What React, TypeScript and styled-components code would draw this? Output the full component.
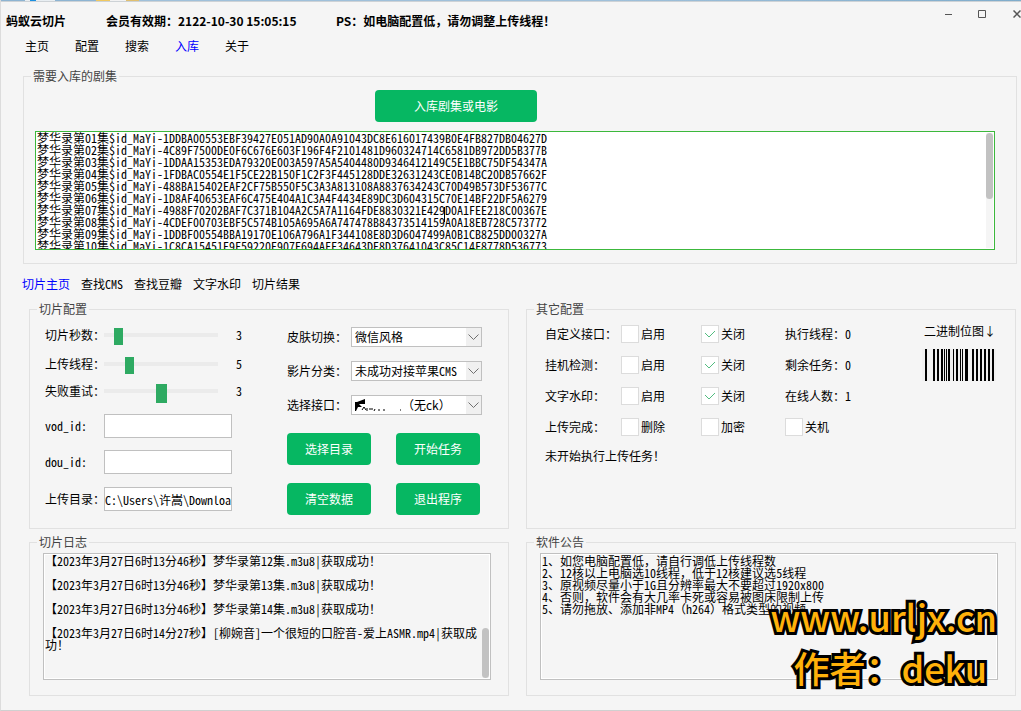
import React from "react";
import styled, { createGlobalStyle } from "styled-components";

const GlobalStyle = createGlobalStyle`
  *, *::before, *::after { box-sizing: border-box; }
  body {
    margin: 0;
    background: #f5f5f5;
    color: #000;
    font-family: "Noto Sans CJK SC", sans-serif;
    font-size: 12px;
    line-height: 16px;
    text-spacing-trim: space-all;
  }
  button, input, select, textarea { font: inherit; color: inherit; }
`;

/* ---------- window frame ---------- */

const Window = styled.div`
  position: relative;
  min-height: 100vh;
  border-left: 1px solid #dcdcdc;
  border-bottom: 1px solid #d0d0d0;
  overflow: hidden;
`;

const DesktopEdge = styled.div`
  height: 2px;
  border-bottom: 1px solid #cdd2d6;
  background: linear-gradient(
    90deg,
    #8db4d2 0 24px,
    #e8eef2 24px 29px,
    #1b8fe0 29px 35px,
    #e8eef2 35px 54px,
    #8db4d2 54px 95px,
    #f0c860 95px 109px,
    #f2f2f2 109px 125px,
    #e0bf70 125px 138px,
    #9fc0da 138px 60%,
    #7faccb
  );
`;

const TitleBar = styled.header`
  display: flex;
  height: 36px;
  padding-left: 5px;
`;

const TitleText = styled.div<{ $width?: number }>`
  width: ${(p) => (p.$width ? `${p.$width}px` : "auto")};
  padding-top: 11px;
  font-weight: 700;
  white-space: nowrap;
`;

const WindowButtons = styled.div`
  display: flex;
  margin-left: auto;
`;

const WindowButton = styled.button<{ $edge?: boolean }>`
  display: flex;
  align-items: center;
  justify-content: ${(p) => (p.$edge ? "flex-end" : "center")};
  width: ${(p) => (p.$edge ? 22 : 34)}px;
  height: 24px;
  padding: 0;
  border: 0;
  background: none;
`;

const Nav = styled.nav<{ $gap: number }>`
  display: flex;
  gap: ${(p) => p.$gap}px;
`;

const MainNav = styled(Nav)`
  padding-left: 24px;
`;

const TabNav = styled(Nav)`
  margin: 12px 0 9px;
  padding-left: 21px;
`;

const NavLink = styled.a<{ $active?: boolean }>`
  color: ${(p) => (p.$active ? "#0000ff" : "#000")};
  text-decoration: none;
  font-feature-settings: "hwid";
`;

/* ---------- group boxes ---------- */

const Group = styled.fieldset`
  min-width: 0;
  margin: 0;
  border: 1px solid #e1e1e1;
`;

const Legend = styled.legend`
  margin-left: -6px;
  padding: 0 2px;
  color: #444;
`;

const ImportGroup = styled(Group)`
  margin: 14px 4px 0 22px;
  padding: 6px 21px 13px 11px;

  ${Legend} {
    margin-left: -4px;
  }
`;

const PanelGrid = styled.div`
  display: grid;
  grid-template-columns: minmax(0, 480fr) minmax(0, 490fr);
  gap: 5px 17px;
  padding: 0 5px 14px 28px;
`;

const SliceGroup = styled(Group)`
  display: grid;
  grid-template-columns: 1fr 195px;
  padding: 3px 26px 6px 15px;

  ${Legend} {
    margin-left: -8px;
  }
`;

const OtherGroup = styled(Group)`
  display: flex;
  justify-content: space-between;
  padding: 1px 19px 6px 18px;

  ${Legend} {
    margin-left: -11px;
  }
`;

const TextGroup = styled(Group)`
  padding: 3px 17px 15px 13px;
`;

/* ---------- controls ---------- */

const GreenButton = styled.button<{ $wide?: boolean }>`
  width: ${(p) => (p.$wide ? 162 : 84)}px;
  height: 32px;
  padding: 0;
  border: 0;
  border-radius: 4px;
  background: #06b762;
  color: #fff;
`;

const ImportAction = styled.div`
  margin-bottom: 9px;
  padding-left: 340px;
`;

const BoxFrame = styled.div<{ $accent?: boolean; $height: number }>`
  position: relative;
  height: ${(p) => p.$height}px;
  border: 1px solid ${(p) => (p.$accent ? "#3cb83c" : "#c0c0c0")};
  outline: 1px solid ${(p) => (p.$accent ? "transparent" : "#fff")};
  outline-offset: -2px;
  background: ${(p) => (p.$accent ? "#fff" : "#f5f5f5")};
`;

const BoxText = styled.textarea<{ $flush?: boolean }>`
  display: block;
  width: 100%;
  height: 100%;
  padding: ${(p) => (p.$flush ? 0 : 1)}px 10px 0 1px;
  border: 0;
  outline: 0;
  resize: none;
  overflow: hidden;
  background: transparent;
  line-height: 12px;
  font-feature-settings: "hwid";
`;

const NoticeText = styled.div`
  padding: 1px 1px 0;
  line-height: 12px;
`;

const NoticeLine = styled.p`
  margin: 0;
`;

const HalfWidth = styled.span`
  font-feature-settings: "hwid";
`;

const ScrollTrack = styled.div<{ $filled?: boolean; $end?: boolean }>`
  position: absolute;
  top: 1px;
  right: 1px;
  bottom: 1px;
  display: flex;
  align-items: ${(p) => (p.$end ? "flex-end" : "flex-start")};
  width: 7px;
  background: ${(p) => (p.$filled ? "#f5f5f5" : "transparent")};
`;

const ScrollThumb = styled.div<{ $length: number }>`
  width: 7px;
  height: ${(p) => p.$length}px;
  border-radius: 4px;
  background: #c2c2c2;
`;

const PointerBeam = styled.span`
  position: absolute;
  top: 75px;
  left: 408px;
  width: 1px;
  height: 15px;
  background: #000;
`;

const FieldColumn = styled.div`
  display: grid;
  grid-template-columns: 59px 128px 1fr;
  grid-template-rows: 30px 28px 26px 44px 28px 46px;
  align-items: center;
`;

const FieldLabel = styled.label`
  font-feature-settings: "hwid";
  white-space: nowrap;
`;

const FieldValue = styled.output`
  padding-left: 4px;
  font-feature-settings: "hwid";
`;

const Slider = styled.input<{ $thumb: number }>`
  appearance: none;
  width: 114px;
  height: 20px;
  margin: 0;
  background: transparent;

  &::-webkit-slider-runnable-track {
    height: 4px;
    background: #ebebeb;
  }
  &::-webkit-slider-thumb {
    appearance: none;
    width: ${(p) => p.$thumb}px;
    height: ${(p) => p.$thumb + 8}px;
    margin-top: -5px;
    background: #2eaa62;
  }
`;

const TextInput = styled.input`
  grid-column: span 2;
  width: 128px;
  height: 24px;
  padding: 0;
  border: 1px solid #c0c0c0;
  border-radius: 0;
  background: #fff;
  font-feature-settings: "hwid";
`;

const ChoiceRow = styled.div`
  display: flex;
  align-items: center;
  justify-content: space-between;
  height: 34px;
`;

const SelectFrame = styled.div`
  display: grid;
  width: 131px;
  height: 20px;

  & > * {
    grid-area: 1 / 1;
  }
`;

const SelectBox = styled.select<{ $indent?: boolean }>`
  appearance: none;
  width: 100%;
  height: 20px;
  padding: 0 16px 0 ${(p) => (p.$indent ? 50 : 3)}px;
  border: 1px solid #c0c0c0;
  border-radius: 0;
  background: linear-gradient(#f0f0f0, #f0f0f0) right / 15px 100% no-repeat #fff;
  font-feature-settings: ${(p) => (p.$indent ? "normal" : '"hwid"')};
`;

const Chevron = styled.svg`
  justify-self: end;
  align-self: center;
  margin-right: 3px;
  pointer-events: none;
`;

const Smudge = styled.svg`
  align-self: center;
  margin-left: 4px;
  pointer-events: none;
`;

const ButtonGrid = styled.div`
  display: grid;
  grid-template-columns: 84px 84px;
  gap: 18px 25px;
  margin-top: 11px;
`;

const OptionGrid = styled.div`
  display: grid;
  grid-template-columns: 76px 80px 84px 100px;
  grid-template-rows: repeat(4, 31px) 28px;
  align-items: center;
`;

const StatusLine = styled.div`
  grid-column: 1 / -1;
`;

const CheckLabel = styled.label`
  display: flex;
  align-items: center;
  gap: 2px;
`;

const CheckFrame = styled.span`
  display: grid;
  width: 18px;
  height: 18px;
  place-items: center;

  & > * {
    grid-area: 1 / 1;
  }
`;

const CheckInput = styled.input`
  appearance: none;
  width: 18px;
  height: 18px;
  margin: 0;
  border: 1px solid #dcdcdc;
  background: #fff;

  & + svg {
    visibility: hidden;
    pointer-events: none;
  }
  &:checked + svg {
    visibility: visible;
  }
`;

const BarcodeColumn = styled.figure`
  display: flex;
  flex-direction: column;
  gap: 10px;
  margin: 0;
  padding-top: 5px;
  text-align: right;
`;

const Watermark = styled.div`
  position: absolute;
  right: 24px;
  bottom: 17px;
  display: flex;
  flex-direction: column;
  align-items: flex-end;
  color: #ffb10a;
  font-size: 36px;
  font-weight: 500;
  line-height: 51px;
  white-space: nowrap;
  -webkit-text-stroke: 6px #000;
  paint-order: stroke fill;
  stroke-linejoin: round;
  pointer-events: none;
`;

const Author = styled.span`
  margin-right: 10px;
`;

/* ---------- data ---------- */

const episodes = [
  "1DDBA00553EBF39427E051AD90A0A91043DC8E616017439B0E4FB827DB04627D",
  "4C89F7500DE0F6C676E603F196F4F2101481D960324714C6581DB972DD5B377B",
  "1DDAA15353EDA79320E003A597A5A5404480D9346412149C5E1BBC75DF54347A",
  "1FDBAC0554E1F5CE22B150F1C2F3F445128DDE32631243CE0B14BC20DB57662F",
  "488BA15402EAF2CF75B550F5C3A3A813108A8837634243C70D49B573DF53677C",
  "1D8AF40653EAF6C475E404A1C3A4F4434E89DC3D604315C70E14BF22DF5A6279",
  "4988F70202BAF7C371B104A2C5A7A1164FDE8830321E429D0A1FEE218C00367E",
  "4CDEF00703EBF5C574B105A695A6A747478B84373514159A0A18EB728C573772",
  "1DDBF00554BBA19170E106A796A1F344108E8D3D6047499A0B1CB825DD00327A",
  "1C8CA15451E9F59220E907E694AFF34643DE8D37641043C85C14F8778D536773",
]
  .map((id, i) => `梦华录第${String(i + 1).padStart(2, "0")}集$id_MaYi-${id}`)
  .join("\n");

const log = [
  "【2023年3月27日6时13分46秒】梦华录第12集.m3u8|获取成功！",
  "【2023年3月27日6时13分46秒】梦华录第13集.m3u8|获取成功！",
  "【2023年3月27日6时13分46秒】梦华录第14集.m3u8|获取成功！",
  "【2023年3月27日6时14分27秒】[柳婉音]一个很短的口腔音-爱上ASMR.mp4|获取成功！",
].join("\n\n");

const notice = [
  "1、如您电脑配置低，请自行调低上传线程数",
  "2、12核以上电脑选10线程，低于12核建议选5线程",
  "3、原视频尽量小于1G且分辨率最大不要超过1920x800",
  "4、否则，软件会有大几率卡死或容易被图床限制上传",
  "5、请勿拖放、添加非MP4（h264）格式类型的视频",
];

const sliders = [
  { id: "seconds", label: "切片秒数：", min: 1, max: 22, value: 3, thumb: 9 },
  { id: "threads", label: "上传线程：", min: 1, max: 21, value: 5, thumb: 9 },
  { id: "retries", label: "失败重试：", min: 1, max: 5, value: 3, thumb: 11 },
];

const inputs = [
  { id: "vod", label: "vod_id:", value: "" },
  { id: "dou", label: "dou_id:", value: "" },
  { id: "dir", label: "上传目录：", value: "C:\\Users\\许嵩\\Downloads" },
];

const choices = [
  { id: "skin", label: "皮肤切换：", value: "微信风格" },
  { id: "kind", label: "影片分类：", value: "未成功对接苹果CMS" },
  { id: "api", label: "选择接口：", value: "（无ck）", smudged: true },
];

const toggles = [
  { label: "自定义接口：", status: "执行线程：", count: 0 },
  { label: "挂机检测：", status: "剩余任务：", count: 0 },
  { label: "文字水印：", status: "在线人数：", count: 1 },
];

/* x and width of each barcode bar */
const bars: [number, number][] = [
  [3, 2], [11, 2], [15, 2], [19, 2], [22, 1], [24, 1], [26, 2], [31, 1], [34, 2],
  [38, 1], [40, 1], [43, 3], [50, 2], [54, 2], [58, 2], [62, 2], [66, 2], [70, 2],
];

/* ---------- pieces ---------- */

/* Sets ASCII runs in half-width forms and leaves full-width punctuation alone. */
function Mixed({ text }: { text: string }) {
  return (
    <>
      {text.split(/([\x20-\x7e]+)/).map((part, i) =>
        i % 2 ? <HalfWidth key={i}>{part}</HalfWidth> : part
      )}
    </>
  );
}

function CheckBox({ text, checked }: { text: string; checked?: boolean }) {
  return (
    <CheckLabel>
      <CheckFrame>
        <CheckInput type="checkbox" defaultChecked={checked} />
        <svg width="12" height="8" viewBox="0 0 12 8" fill="none" stroke="#52bd80">
          <path d="M1 3 L5 7 L11 1" />
        </svg>
      </CheckFrame>
      {text}
    </CheckLabel>
  );
}

function Choice({ id, label, value, smudged }: { id: string; label: string; value: string; smudged?: boolean }) {
  return (
    <ChoiceRow>
      <FieldLabel htmlFor={id}>{label}</FieldLabel>
      <SelectFrame>
        <SelectBox id={id} $indent={smudged}>
          <option>{value}</option>
        </SelectBox>
        {smudged && (
          <Smudge width="48" height="12" viewBox="0 0 48 12">
            <path d="M2 3 L10 0 V5 H4 L7 8 H3 L1 12 H0 V3 Z" />
            <path d="M7 11 L9 8 L11 11 M12 9 V12 M14 10 H18 M20 10 L19 12 M24 10 V12 M28 11 H30 M45 11 H46" stroke="#000" fill="none" />
          </Smudge>
        )}
        <Chevron width="11" height="7" viewBox="0 0 11 7" fill="none" stroke="#707070">
          <path d="M0.5 0.5 L5.5 5.5 L10.5 0.5" />
        </Chevron>
      </SelectFrame>
    </ChoiceRow>
  );
}

export default function App() {
  return (
    <Window>
      <GlobalStyle />
      <DesktopEdge />
      <TitleBar>
        <TitleText $width={100}>蚂蚁云切片</TitleText>
        <TitleText $width={230}>会员有效期：2122-10-30 15:05:15</TitleText>
        <TitleText>PS：如电脑配置低，请勿调整上传线程！</TitleText>
        <WindowButtons>
          <WindowButton type="button" aria-label="最小化">
            <svg width="8" height="8" viewBox="0 0 8 8" stroke="#555">
              <path d="M1 4.5 H8" />
            </svg>
          </WindowButton>
          <WindowButton type="button" aria-label="最大化">
            <svg width="8" height="8" viewBox="0 0 8 8" fill="none" stroke="#555">
              <path d="M0.5 0.5 H7.5 V7.5 H0.5 Z" />
            </svg>
          </WindowButton>
          <WindowButton type="button" aria-label="关闭" $edge>
            <svg width="8" height="8" viewBox="0 0 8 8" stroke="#555" strokeWidth="1.5">
              <path d="M0.5 0.5 L7.5 7.5 M7.5 0.5 L0.5 7.5" />
            </svg>
          </WindowButton>
        </WindowButtons>
      </TitleBar>

      <MainNav $gap={26}>
        {["主页", "配置", "搜索", "入库", "关于"].map((t) => (
          <NavLink key={t} href="#" $active={t === "入库"}>{t}</NavLink>
        ))}
      </MainNav>

      <ImportGroup>
        <Legend>需要入库的剧集</Legend>
        <ImportAction>
          <GreenButton type="button" $wide>入库剧集或电影</GreenButton>
        </ImportAction>
        <BoxFrame $accent $height={119}>
          <BoxText aria-label="需要入库的剧集" defaultValue={episodes} spellCheck={false} wrap="off" $flush />
          <PointerBeam />
          <ScrollTrack $filled>
            <ScrollThumb $length={66} />
          </ScrollTrack>
        </BoxFrame>
      </ImportGroup>

      <TabNav $gap={11}>
        {["切片主页", "查找CMS", "查找豆瓣", "文字水印", "切片结果"].map((t) => (
          <NavLink key={t} href="#" $active={t === "切片主页"}>{t}</NavLink>
        ))}
      </TabNav>

      <PanelGrid>
        <SliceGroup>
          <Legend>切片配置</Legend>
          <FieldColumn>
            {sliders.map((s) => (
              <React.Fragment key={s.id}>
                <FieldLabel htmlFor={s.id}>{s.label}</FieldLabel>
                <Slider id={s.id} type="range" min={s.min} max={s.max} defaultValue={s.value} $thumb={s.thumb} />
                <FieldValue htmlFor={s.id}>{s.value}</FieldValue>
              </React.Fragment>
            ))}
            {inputs.map((f) => (
              <React.Fragment key={f.id}>
                <FieldLabel htmlFor={f.id}>{f.label}</FieldLabel>
                <TextInput id={f.id} type="text" defaultValue={f.value} spellCheck={false} />
              </React.Fragment>
            ))}
          </FieldColumn>
          <div>
            {choices.map((c) => (
              <Choice key={c.id} {...c} />
            ))}
            <ButtonGrid>
              {["选择目录", "开始任务", "清空数据", "退出程序"].map((t) => (
                <GreenButton key={t} type="button">{t}</GreenButton>
              ))}
            </ButtonGrid>
          </div>
        </SliceGroup>

        <OtherGroup>
          <Legend>其它配置</Legend>
          <OptionGrid>
            {toggles.map((t) => (
              <React.Fragment key={t.label}>
                <span>{t.label}</span>
                <CheckBox text="启用" />
                <CheckBox text="关闭" checked />
                <span>
                  {t.status}
                  <HalfWidth>{t.count}</HalfWidth>
                </span>
              </React.Fragment>
            ))}
            <span>上传完成：</span>
            <CheckBox text="删除" />
            <CheckBox text="加密" />
            <CheckBox text="关机" />
            <StatusLine>未开始执行上传任务！</StatusLine>
          </OptionGrid>
          <BarcodeColumn>
            <figcaption>二进制位图↓</figcaption>
            <svg width="74" height="32" viewBox="0 0 74 32" role="img" aria-label="二进制位图">
              <rect width="74" height="32" fill="#f0f0f0" />
              {bars.map(([x, w]) => (
                <rect key={x} x={x} width={w} height="32" />
              ))}
            </svg>
          </BarcodeColumn>
        </OtherGroup>

        <TextGroup>
          <Legend>切片日志</Legend>
          <BoxFrame $height={127}>
            <BoxText aria-label="切片日志" readOnly value={log} />
            <ScrollTrack $end>
              <ScrollThumb $length={50} />
            </ScrollTrack>
          </BoxFrame>
        </TextGroup>

        <TextGroup>
          <Legend>软件公告</Legend>
          <BoxFrame $height={127}>
            <NoticeText>
              {notice.map((line) => (
                <NoticeLine key={line}>
                  <Mixed text={line} />
                </NoticeLine>
              ))}
            </NoticeText>
          </BoxFrame>
        </TextGroup>
      </PanelGrid>

      <Watermark>
        <span>www.urljx.cn</span>
        <Author>作者：deku</Author>
      </Watermark>
    </Window>
  );
}
